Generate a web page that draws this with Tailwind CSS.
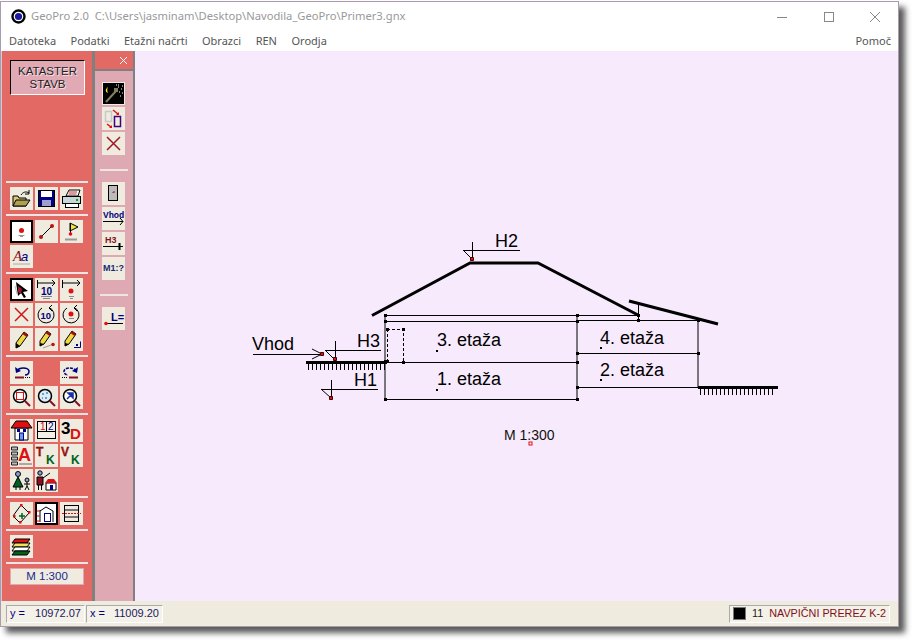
<!DOCTYPE html>
<html lang="en">
<head>
  <meta charset="UTF-8" />
  <title>GeoPro 2.0</title>
  <script src="https://cdn.jsdelivr.net/npm/@tailwindcss/browser@4"></script>
</head>
<body class="bg-white w-[912px] h-[640px] overflow-hidden font-['Liberation_Sans',sans-serif]">
  <div class="mt-px w-[899px] h-[626px] flex flex-col bg-white border border-[#a99bb0] shadow-[6px_6px_6px_rgba(0,0,0,0.65)]">

    <!-- title bar -->
    <div class="h-[29px] shrink-0 flex items-center text-[#999] text-[11.200px] font-['Noto_Sans',sans-serif]">
      <svg class="ml-[10px] mr-[5px]" width="15" height="15" viewBox="0 0 15 15"><circle cx="7.500" cy="7.500" r="6" fill="#fff" stroke="#000" stroke-width="2.400"/><circle cx="7.500" cy="7.500" r="3.600" fill="#1a1aa0"/></svg>
      <span class="whitespace-pre">GeoPro 2.0  C:\Users\jasminam\Desktop\Navodila_GeoPro\Primer3.gnx</span>
      <div class="ml-auto flex items-center">
        <svg width="12" height="12" viewBox="0 0 12 12" class="mr-[35px]"><path d="M1 6.500h10" stroke="#888"/></svg>
        <svg width="12" height="12" viewBox="0 0 12 12" class="mr-[34px]"><rect x="1.500" y="1.500" width="9" height="9" fill="none" stroke="#888"/></svg>
        <svg width="12" height="12" viewBox="0 0 12 12" class="mr-[17px]"><path d="M1 1l10 10M11 1L1 11" stroke="#888"/></svg>
      </div>
    </div>

    <!-- menu -->
    <div class="h-[20px] shrink-0 flex items-center pl-[8px] pr-[7px] gap-[14.500px] text-[11px] text-[#555] font-['Noto_Sans',sans-serif]">
      <span>Datoteka</span><span>Podatki</span><span>Etažni načrti</span><span>Obrazci</span><span>REN</span><span>Orodja</span>
      <span class="ml-auto">Pomoč</span>
    </div>

    <div class="flex flex-1 min-h-0">
      <!-- main tool panel -->
      <div class="w-[91px] shrink-0 bg-[#e36a64] pt-[9px] pl-[8px] flex flex-col border-l border-[#d8c8d0]">
        <div class="w-[75px] h-[35px] bg-[#e0a9b3] border border-t-black border-l-black border-r-white border-b-white flex items-center justify-center text-center text-[11.500px] leading-[13px] text-[#222] [text-shadow:1px_1px_0_#f4e4e8] mb-[86px]">KATASTER<br>STAVB</div>

        <div class="w-[82px] -ml-[4px] h-[2px] bg-[#eee4e4] mb-[4px]"></div>
        <div class="grid grid-cols-[23px_23px_23px] gap-[2px]">
          <div class="w-[23px] h-[23px] bg-[#efebdf]"><svg width="23" height="23" viewBox="0 0 23 23"><path d="M3 9h5l1 2h7v8H3z" fill="#d8c878" stroke="#000"/><path d="M3 19l3-6h14l-4 6z" fill="#b0a050" stroke="#000"/><path d="M11 8c2-3 5-4 8-2" fill="none" stroke="#000"/><path d="M19 3v4h-4" fill="none" stroke="#000"/></svg></div>
          <div class="w-[23px] h-[23px] bg-[#efebdf]"><svg width="23" height="23" viewBox="0 0 23 23"><rect x="3.500" y="3.500" width="16" height="16" fill="#000080" stroke="#000"/><rect x="6" y="4" width="11" height="6" fill="#fff"/><rect x="7" y="13" width="9" height="6" fill="#a0a0d0"/></svg></div>
          <div class="w-[23px] h-[23px] bg-[#efebdf]"><svg width="23" height="23" viewBox="0 0 23 23"><path d="M6 9l3-6h11l-2 6z" fill="#fff" stroke="#000"/><path d="M9 5h8M8.500 7h8" stroke="#c03030"/><rect x="2.500" y="9.500" width="18" height="7" fill="#c8d8d8" stroke="#000"/><rect x="5.500" y="16.500" width="13" height="4" fill="#fff" stroke="#000"/><rect x="16" y="12" width="2" height="2" fill="#0a0"/></svg></div>
        </div>

        <div class="w-[82px] -ml-[4px] h-[2px] bg-[#eee4e4] my-[4px]"></div>
        <div class="grid grid-cols-[23px_23px_23px] gap-[2px]">
          <div class="w-[23px] h-[23px] bg-white border-2 border-black"><svg width="19" height="19" viewBox="0 0 19 19"><circle cx="9.500" cy="8.500" r="2.500" fill="#e01010"/><path d="M8 14.500h3M6.500 13.500h6" stroke="#999"/></svg></div>
          <div class="w-[23px] h-[23px] bg-[#efebdf]"><svg width="23" height="23" viewBox="0 0 23 23"><path d="M6 17L17 6" stroke="#000"/><circle cx="6" cy="17" r="2" fill="#c01010"/><circle cx="17" cy="6" r="2" fill="#c01010"/></svg></div>
          <div class="w-[23px] h-[23px] bg-[#efebdf]"><svg width="23" height="23" viewBox="0 0 23 23"><path d="M10 3l8 4-8 4z" fill="#f0e040" stroke="#000"/><path d="M10.500 3v12" stroke="#000"/><circle cx="10.500" cy="14" r="1.800" fill="#e01010"/><path d="M5 19.500h12" stroke="#999" stroke-width="2"/></svg></div>

          <div class="w-[23px] h-[23px] bg-[#efebdf]"><svg width="23" height="23" viewBox="0 0 23 23"><text x="3" y="16" font-size="15" font-style="italic" font-family="Liberation Serif" fill="#8a1020">A</text><text x="11" y="16" font-size="13" font-style="italic" font-family="Liberation Sans" fill="#000080">a</text><path d="M3 19h17" stroke="#aaa"/></svg></div>
          <div></div><div></div>
        </div>

        <div class="w-[82px] -ml-[4px] h-[2px] bg-[#eee4e4] my-[4px]"></div>
        <div class="grid grid-cols-[23px_23px_23px] gap-[2px]">
          <div class="w-[23px] h-[23px] bg-white border-2 border-black"><svg width="19" height="19" viewBox="0 0 19 19"><path d="M4 2l12 9-5 1 3 5-2 1-3-5-3 3z" fill="#000"/><path d="M6 6l4 3-1 5-3-2z" fill="#a01830"/><path d="M3 6l2 8" stroke="#bbb"/></svg></div>
          <div class="w-[23px] h-[23px] bg-[#efebdf]"><svg width="23" height="23" viewBox="0 0 23 23"><path d="M2.500 2v8M3 5h17M17 2l3 3-3 3" fill="none" stroke="#000"/><text x="6" y="17" font-size="10" font-weight="bold" fill="#000080">10</text><path d="M6 18.500h11M8 20.500h7" stroke="#888"/></svg></div>
          <div class="w-[23px] h-[23px] bg-[#efebdf]"><svg width="23" height="23" viewBox="0 0 23 23"><path d="M2.500 2v8M3 5h17M17 2l3 3-3 3" fill="none" stroke="#000"/><circle cx="11" cy="13" r="2.500" fill="#e01010"/><path d="M9 18.500h5M10 20.500h3" stroke="#888"/></svg></div>

          <div class="w-[23px] h-[23px] bg-[#efebdf]"><svg width="23" height="23" viewBox="0 0 23 23"><path d="M5 5l13 13M18 5L5 18" stroke="#d01818" stroke-width="1.500"/></svg></div>
          <div class="w-[23px] h-[23px] bg-[#efebdf]"><svg width="23" height="23" viewBox="0 0 23 23"><path d="M14 4.500A8 8 0 1 1 7 5" fill="none" stroke="#000"/><path d="M17 2l-3 3 3 3" fill="none" stroke="#000"/><text x="5.500" y="16" font-size="9.500" font-weight="bold" fill="#000080">10</text></svg></div>
          <div class="w-[23px] h-[23px] bg-[#efebdf]"><svg width="23" height="23" viewBox="0 0 23 23"><path d="M14 4.500A8 8 0 1 1 7 5" fill="none" stroke="#000"/><path d="M17 2l-3 3 3 3" fill="none" stroke="#000"/><circle cx="11" cy="11" r="2.500" fill="#e01010"/><path d="M9 15.500h5" stroke="#888"/></svg></div>

          <div class="w-[23px] h-[23px] bg-[#efebdf]"><svg width="23" height="23" viewBox="0 0 23 23"><path d="M14 4l4 3-8 11-4 2 0-5z" fill="#f0d840" stroke="#000"/><path d="M14 4l4 3-1.500 2-4-3z" fill="#a01010"/><path d="M6 15l4 3-4 2z" fill="#000"/></svg></div>
          <div class="w-[23px] h-[23px] bg-[#efebdf]"><svg width="23" height="23" viewBox="0 0 23 23"><path d="M12 3l4 3-7 10-4 2 0-5z" fill="#f0d840" stroke="#000"/><path d="M12 3l4 3-1.500 2-4-3z" fill="#a01010"/><path d="M5 15l4 1-4 2z" fill="#000"/><path d="M8 20l8-3" stroke="#999"/><circle cx="18" cy="16.500" r="1.800" fill="#c01010"/></svg></div>
          <div class="w-[23px] h-[23px] bg-[#efebdf]"><svg width="23" height="23" viewBox="0 0 23 23"><path d="M12 3l4 3-7 10-4 2 0-5z" fill="#f0d840" stroke="#000"/><path d="M12 3l4 3-1.500 2-4-3z" fill="#a01010"/><path d="M5 15l4 1-4 2z" fill="#000"/><path d="M14 19.500h6.500v-6" fill="none" stroke="#000080"/><rect x="16" y="16" width="2" height="2" fill="#000080"/></svg></div>
        </div>

        <div class="w-[82px] -ml-[4px] h-[2px] bg-[#eee4e4] my-[4px]"></div>
        <div class="grid grid-cols-[23px_23px_23px] gap-[2px]">
          <div class="w-[23px] h-[23px] bg-[#efebdf]"><svg width="23" height="23" viewBox="0 0 23 23"><path d="M7 10c2-4 11-4 12 0 0 3-2 4-4 4" fill="none" stroke="#000080" stroke-width="1.500"/><path d="M5 6l1 6 5-2z" fill="#000080"/><path d="M5 16.500h9" stroke="#8a1020" stroke-width="2"/><path d="M15 16.500h6" stroke="#000" stroke-dasharray="1 1"/></svg></div>
          <div></div>
          <div class="w-[23px] h-[23px] bg-[#efebdf]"><svg width="23" height="23" viewBox="0 0 23 23"><path d="M16 10c-2-4-11-4-12 0 0 3 2 4 4 4" fill="none" stroke="#000080" stroke-width="1.500" stroke-dasharray="3 1"/><path d="M18 6l-1 6-5-2z" fill="#000080"/><path d="M9 16.500h9" stroke="#8a1020" stroke-width="2"/><path d="M2 16.500h6" stroke="#000" stroke-dasharray="1 1"/></svg></div>

          <div class="w-[23px] h-[23px] bg-[#efebdf]"><svg width="23" height="23" viewBox="0 0 23 23"><circle cx="10" cy="10" r="6.500" fill="#fff" stroke="#000" stroke-width="1.500"/><rect x="6.500" y="6.500" width="7" height="7" fill="none" stroke="#e01010"/><path d="M15 15l5 5" stroke="#8a1020" stroke-width="2"/></svg></div>
          <div class="w-[23px] h-[23px] bg-[#efebdf]"><svg width="23" height="23" viewBox="0 0 23 23"><circle cx="10" cy="10" r="6.500" fill="#dcecf8" stroke="#000" stroke-width="1.500"/><path d="M7 8h2M10 12h2M11 7h2M7 12h1" stroke="#6aa0d0" stroke-width="2"/><path d="M15 15l5 5" stroke="#8a1020" stroke-width="2"/></svg></div>
          <div class="w-[23px] h-[23px] bg-[#efebdf]"><svg width="23" height="23" viewBox="0 0 23 23"><circle cx="10" cy="10" r="6.500" fill="#fff" stroke="#000" stroke-width="1.500"/><path d="M7 13l5-5M8 7h5v5z" stroke="#1a30a0" stroke-width="1.500" fill="#1a30a0"/><path d="M15 15l5 5" stroke="#8a1020" stroke-width="2"/></svg></div>
        </div>

        <div class="w-[82px] -ml-[4px] h-[2px] bg-[#eee4e4] my-[4px]"></div>
        <div class="grid grid-cols-[23px_23px_23px] gap-[2px]">
          <div class="w-[23px] h-[23px] bg-[#efebdf]"><svg width="23" height="23" viewBox="0 0 23 23"><path d="M5 9h13v12H5z" fill="#fff" stroke="#000"/><path d="M1 9l5-7h11l5 7z" fill="#e01010" stroke="#000"/><rect x="9.500" y="14" width="4" height="7" fill="#60a0e0" stroke="#000080"/><rect x="7" y="10" width="3" height="3" fill="#000080"/><rect x="13" y="10" width="3" height="3" fill="#000080"/></svg></div>
          <div class="w-[23px] h-[23px] bg-[#efebdf]"><svg width="23" height="23" viewBox="0 0 23 23"><rect x="2.500" y="2.500" width="18" height="17" fill="#f4f0e8" stroke="#000"/><path d="M11.500 2.500v10M2.500 12.500h18" stroke="#000"/><text x="5" y="11" font-size="10" fill="#d01010">1</text><text x="13" y="11" font-size="10" fill="#000080">2</text></svg></div>
          <div class="w-[23px] h-[23px] bg-[#efebdf]"><svg width="23" height="23" viewBox="0 0 23 23"><text x="1" y="15" font-size="17" font-weight="bold" fill="#000">3</text><text x="10" y="20" font-size="15" font-weight="bold" fill="#e01010">D</text></svg></div>

          <div class="w-[23px] h-[23px] bg-[#efebdf]"><svg width="23" height="23" viewBox="0 0 23 23"><path d="M1.500 3h6v3h-6zM1.500 8h6v3h-6zM1.500 13h6v3h-6zM1.500 18h6v3h-6z" fill="#bbb" stroke="#222"/><text x="8" y="17" font-size="18" font-weight="bold" fill="#e01010">A</text><path d="M9 20h13" stroke="#666"/></svg></div>
          <div class="w-[23px] h-[23px] bg-[#efebdf]"><svg width="23" height="23" viewBox="0 0 23 23"><text x="1" y="12" font-size="12" font-weight="bold" fill="#d01010" stroke="#000" stroke-width="0.300">T</text><text x="11" y="20" font-size="12" font-weight="bold" fill="#006020">K</text></svg></div>
          <div class="w-[23px] h-[23px] bg-[#efebdf]"><svg width="23" height="23" viewBox="0 0 23 23"><text x="1" y="12" font-size="12" font-weight="bold" fill="#d01010" stroke="#000" stroke-width="0.300">V</text><text x="11" y="20" font-size="12" font-weight="bold" fill="#006020">K</text></svg></div>

          <div class="w-[23px] h-[23px] bg-[#efebdf]"><svg width="23" height="23" viewBox="0 0 23 23"><circle cx="8" cy="5" r="2.500" fill="#8aa0d0" stroke="#000"/><path d="M8 8l-5 10h10z" fill="#006020" stroke="#000"/><path d="M6 18v3M10 18v3" stroke="#000"/><circle cx="17" cy="11" r="2" fill="#8aa0d0" stroke="#000"/><path d="M17 13v4M14 15h6M17 17l-2 4M17 17l2 4" stroke="#000" fill="none"/></svg></div>
          <div class="w-[23px] h-[23px] bg-[#efebdf]"><svg width="23" height="23" viewBox="0 0 23 23"><circle cx="5" cy="4" r="2.200" fill="#8aa0d0" stroke="#000"/><path d="M2 8h6v8H2z" fill="#8a1020" stroke="#000"/><path d="M3.500 16v5M6.500 16v5M8 9l7-5" stroke="#000"/><path d="M11 14h10v7H11z" fill="#fff" stroke="#000"/><path d="M10 14l3-4h6l3 4z" fill="#e01010"/><rect x="15" y="16" width="3" height="5" fill="#000080"/></svg></div>
          <div></div>
        </div>

        <div class="w-[82px] -ml-[4px] h-[2px] bg-[#eee4e4] my-[4px]"></div>
        <div class="grid grid-cols-[23px_23px_23px] gap-[2px]">
          <div class="w-[23px] h-[23px] bg-[#efebdf]"><svg width="23" height="23" viewBox="0 0 23 23"><path d="M11 3l8 8-9 10-7-7z" fill="none" stroke="#000"/><rect x="10" y="2" width="2.500" height="2.500" fill="#e01010"/><rect x="18" y="9" width="2.500" height="2.500" fill="#e01010"/><rect x="3" y="13" width="2.500" height="2.500" fill="#e01010"/><rect x="9" y="19" width="2.500" height="2.500" fill="#e01010"/><path d="M9 14h6M12 11v6" stroke="#006020" stroke-width="1.500"/></svg></div>
          <div class="w-[23px] h-[23px] bg-white border-2 border-black"><svg width="19" height="19" viewBox="0 0 19 19"><path d="M3 7l6-4 7 4" fill="none" stroke="#000"/><path d="M3 6v12M16 7v11" stroke="#000"/><path d="M0 7h3M0 12h3M0 17h3" stroke="#e01010"/><rect x="7.500" y="9.500" width="6" height="8" fill="none" stroke="#000080"/></svg></div>
          <div class="w-[23px] h-[23px] bg-[#efebdf]"><svg width="23" height="23" viewBox="0 0 23 23"><rect x="4.500" y="3.500" width="14" height="16" fill="none" stroke="#000"/><path d="M4.500 8h14M4.500 15h14" stroke="#000"/><path d="M2 11.500h19" stroke="#e01010" stroke-dasharray="2 1"/></svg></div>
        </div>

        <div class="w-[82px] -ml-[4px] h-[2px] bg-[#eee4e4] my-[4px]"></div>
        <div class="w-[23px] h-[23px] bg-[#efebdf]"><svg width="23" height="23" viewBox="0 0 23 23"><path d="M5 4h15l-3 4H2z" fill="#e01010" stroke="#000"/><path d="M5 8h15l-3 4H2z" fill="#f0e060" stroke="#000"/><path d="M5 12h15l-3 4H2z" fill="#fff" stroke="#000"/><path d="M5 16h15l-3 4H2z" fill="#006020" stroke="#000"/></svg></div>

        <div class="w-[82px] -ml-[4px] h-[2px] bg-[#eee4e4] my-[4px]"></div>
        <div class="w-[74px] h-[17px] bg-[#efebdf] border border-[#dfa9b3] flex items-center justify-center text-[11.500px] text-[#1a2a90]">M 1:300</div>
      </div>

      <div class="w-[3px] shrink-0 bg-[#808080]"></div>

      <!-- second tool panel -->
      <div class="w-[38px] shrink-0 bg-[#dfa9b3] flex flex-col">
        <div class="h-[18px] shrink-0 bg-[#e36a64] flex items-center justify-end pr-[5px] border-b-2 border-[#808080] box-content">
          <svg width="9" height="9" viewBox="0 0 9 9"><path d="M1 1l7 7M8 1L1 8" stroke="#fff"/></svg>
        </div>
        <div class="pl-[7px] pt-[11px] flex flex-col gap-[2px]">
          <div class="w-[23px] h-[23px] bg-[#efebdf] p-px"><svg width="21" height="21" viewBox="0 0 21 21"><rect width="21" height="21" fill="#000"/><path d="M5 4c-3 2-3 5 0 6-1-2-1-4 0-6z" fill="#f0e040"/><path d="M3 19L13 8" stroke="#80805a" stroke-width="2"/><rect x="11" y="5" width="4" height="4" fill="#80805a"/><path d="M15 4h1M18 6h1M16 9h1M19 10h1M17 13h1M15 2h1M19 3h1M13 2h1" stroke="#fff"/></svg></div>
          <div class="w-[23px] h-[23px] bg-[#efebdf]"><svg width="23" height="23" viewBox="0 0 23 23"><rect x="3.500" y="4.500" width="6" height="10" fill="none" stroke="#c8c8c8" stroke-width="1.500"/><rect x="12.500" y="9.500" width="6" height="10" fill="none" stroke="#400080" stroke-width="1.500"/><path d="M11 3l5 4M5 17l4 3" stroke="#e01010" stroke-width="1.500"/><path d="M17 8l-3 0 3-3zM10 21l-3 0 3-3z" fill="#e01010"/></svg></div>
          <div class="w-[23px] h-[23px] bg-[#efebdf]"><svg width="23" height="23" viewBox="0 0 23 23"><path d="M5 5l13 13M18 5L5 18" stroke="#a01828" stroke-width="1.500"/></svg></div>
          <div class="w-[38px] -ml-[7px] mt-[12px] mb-[9px] px-[5px]"><div class="h-[2px] bg-[#eee4e4]"></div></div>
          <div class="w-[23px] h-[23px] bg-[#efebdf]"><svg width="23" height="23" viewBox="0 0 23 23"><rect x="6.500" y="3.500" width="9" height="15" fill="#bbb" stroke="#000"/><path d="M11 10h2M11 10v1" stroke="#a01020"/></svg></div>
          <div class="w-[23px] h-[23px] bg-[#efebdf]"><svg width="23" height="23" viewBox="0 0 23 23"><text x="1" y="11" font-size="8.500" font-weight="bold" fill="#000080">Vhod</text><path d="M1 14.500h20M18 11l3 3.500-3 3.500" fill="none" stroke="#000"/></svg></div>
          <div class="w-[23px] h-[23px] bg-[#efebdf]"><svg width="23" height="23" viewBox="0 0 23 23"><text x="3" y="11" font-size="9" font-weight="bold" fill="#8a1020">H3</text><path d="M1 14.500h20" stroke="#000"/><path d="M17.500 11v7" stroke="#000" stroke-width="2"/></svg></div>
          <div class="w-[23px] h-[23px] bg-[#efebdf] flex items-center justify-center text-[9px] font-bold text-[#1a2a70] whitespace-nowrap">M1:?</div>
          <div class="w-[38px] -ml-[7px] mt-[12px] mb-[9px] px-[5px]"><div class="h-[2px] bg-[#eee4e4]"></div></div>
          <div class="w-[23px] h-[23px] bg-[#efebdf]"><svg width="23" height="23" viewBox="0 0 23 23"><text x="9" y="14" font-size="11" font-weight="bold" fill="#000080">L=</text><path d="M4 16.500h17" stroke="#000"/><circle cx="4" cy="16.500" r="1.800" fill="#e01010"/></svg></div>
        </div>
      </div>

      <div class="w-[2px] shrink-0 bg-[#808080]"></div>

      <!-- drawing canvas -->
      <div class="flex-1 bg-[#f7eafd]">
        <svg width="763" height="551" viewBox="135 51 763 551" font-family="Liberation Sans" fill="#000">
          <g fill="none" stroke="#000">
            <path d="M372 315.500L470 263H538L638 315" stroke-width="3"/>
            <path d="M629 301L718 324" stroke-width="3"/>
            <path d="M385 315.500H638M385 321.500H577M577 320.500H698M385 315V399M385 362.500H577M385 399.500H577M577 315V399M577 353.500H698M577 387.500H698M698 320V387M638.500 302V320"/>
            <path d="M306 362.500H385M698 387.500H778" stroke-width="3"/>
            <path d="M308 367H385M700 392H776" stroke-width="6" stroke-dasharray="1 3"/>
            <path d="M387 329.500H403.500V362M387.500 329V362" stroke-dasharray="3 2"/>
            <path d="M253 354.500H322M312 349L322 354L312 359"/>
            <path d="M325 350.500H381M335.500 341V359M325 350L334 359"/>
            <path d="M321 389.500H378M331.500 380V398M321 389L331 398"/>
            <path d="M463 250.500H520M472.500 242V259M463 250L472 259"/>
          </g>
          <path d="M384 314h3v3h-3zM384 320h3v3h-3zM384 360h3v4h-3zM384 398h3v3h-3zM576 314h3v3h-3zM576 320h3v3h-3zM576 352h3v3h-3zM576 361h3v3h-3zM576 386h3v3h-3zM576 398h3v3h-3zM637 314h3v3h-3zM637 319h3v3h-3zM697 352h3v3h-3zM697 319h3v3h-3zM386 328h3v3h-3zM402 328h3v3h-3zM386 360h3v3h-3zM402 361h3v3h-3z"/>
          <path d="M436 350h2v2h-2zM436 389h2v2h-2zM600 347h2v2h-2zM600 379h2v2h-2z"/>
          <path d="M320.500 352.500h3v3h-3zM333.500 357.500h3v3h-3zM329.500 396.500h3v3h-3zM470.500 257.500h3v3h-3z" fill="#e01010" stroke="#400"/>
          <rect x="529" y="442" width="3" height="3" fill="none" stroke="#e01010"/>
          <text x="252" y="350" font-size="18">Vhod</text>
          <text x="357" y="347" font-size="18">H3</text>
          <text x="354" y="386" font-size="18">H1</text>
          <text x="495" y="247" font-size="18">H2</text>
          <text x="437" y="346" font-size="18">3. etaža</text>
          <text x="437" y="385" font-size="18">1. etaža</text>
          <text x="600" y="344" font-size="18">4. etaža</text>
          <text x="600" y="376" font-size="18">2. etaža</text>
          <text x="504" y="440" font-size="14" fill="#111">M 1:300</text>
        </svg>
      </div>
    </div>

    <!-- status bar -->
    <div class="h-[25px] shrink-0 bg-[#efebdf] flex items-center pl-[5px] pr-[8px] text-[11px]">
      <div class="w-[79px] h-[18px] border border-[#aaa] border-b-white border-r-white flex items-center px-[3px] text-[#1a1a60] whitespace-pre bg-[#f4f1e8]"><span class="text-[#000080]">y =</span><span class="ml-auto">10972.07</span></div>
      <div class="w-[77px] ml-px h-[18px] border border-[#aaa] border-b-white border-r-white flex items-center px-[3px] text-[#1a1a60] whitespace-pre bg-[#f4f1e8]"><span class="text-[#000080]">x =</span><span class="ml-auto">11009.20</span></div>
      <div class="ml-auto w-[161px] h-[18px] border border-[#aaa] border-b-white border-r-white flex items-center pl-[3px] bg-[#f4f1e8] text-[10.800px]">
        <span class="w-[13px] h-[13px] shrink-0 bg-black border border-[#777]"></span>
        <span class="ml-[6px] text-[#222]">11</span>
        <span class="ml-[6px] text-[#801020] whitespace-nowrap">NAVPIČNI PREREZ K-2</span>
      </div>
    </div>
  </div>
</body>
</html>
